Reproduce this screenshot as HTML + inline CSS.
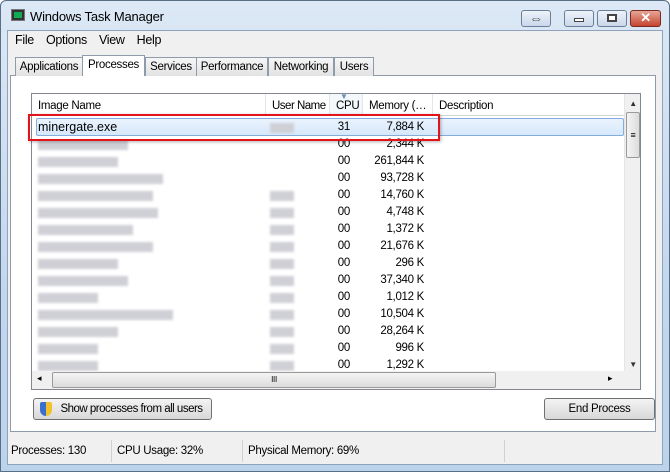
<!DOCTYPE html><html><head><style>
*{box-sizing:border-box;margin:0;padding:0}
body{width:670px;height:472px;overflow:hidden;font-family:"Liberation Sans",sans-serif;font-size:11.5px;letter-spacing:-0.3px;color:#000;position:relative;background:#fff;white-space:nowrap}
.abs{position:absolute}
.frame{left:0;top:0;width:670px;height:472px;background:linear-gradient(#dce8f5,#c3d7ee 60%,#bcd3ec);border:1px solid #5a6e86;border-radius:6px 6px 0 0}
.client{left:7px;top:30px;width:656px;height:435px;background:#f0f0f0;border:1px solid #8ea3bd}
.wb{top:10px;height:17px;border:1px solid #6d7f96;border-radius:3px;background:linear-gradient(#eef3fa,#c9d7ea);text-align:center;color:#555;line-height:14px}
.menu span{margin-right:12px}
.tab{top:57px;height:19px;border:1px solid #8d9bab;border-bottom:none;background:linear-gradient(#f6f6f6,#e2e2e2);padding:3px 0 0;text-align:center}
.panel{left:10px;top:75px;width:646px;height:357px;background:#fff;border:1px solid #8d9bab}
.list{left:31px;top:93px;width:610px;height:297px;border:1px solid #828790;background:#fff;overflow:hidden}
.hdr{top:0;height:22px;width:592px;border-bottom:1px solid #d5d5d5;background:#fff}
.hc{top:0;height:22px;line-height:24px;padding-left:6px;border-right:1px solid #e3e7ec;overflow:hidden}
.row{left:0;width:592px;height:17px;line-height:17px}
.c3{position:absolute;left:298px;width:30px;text-align:right;padding-right:10px}
.c4{position:absolute;left:330px;width:70px;text-align:right;padding-right:8px}
.bl{position:absolute;top:4px;height:10px;background:#cfd0d6;filter:blur(1.2px)}
.btn{top:398px;height:22px;border:1px solid #707070;border-radius:3px;background:linear-gradient(#f3f3f3,#e6e6e6 50%,#d8d8d8);text-align:center;line-height:20px}
.sb{top:440px;height:22px;line-height:22px;padding-left:3px;border-right:1px solid #d0d0d0}
</style></head><body>
<div class="abs frame"></div>
<div class="abs" style="left:11px;top:9px;width:14px;height:12px;background:#333;border:1px solid #777"><div style="margin:2px;height:6px;background:#1a5"></div></div>
<div class="abs" style="left:30px;top:9px;font-size:13px;letter-spacing:-0.2px">Windows Task Manager</div>
<div class="abs wb" style="left:521px;width:30px;font-size:14px">⇔</div>
<div class="abs wb" style="left:564px;width:30px"><div style="margin:7px auto 0;width:10px;height:4px;border:1px solid #444;background:#fff"></div></div>
<div class="abs wb" style="left:597px;width:30px"><div style="margin:3px auto 0;width:10px;height:8px;border:2px solid #444;background:#fff"></div></div>
<div class="abs wb" style="left:630px;width:31px;background:linear-gradient(#e8a597,#c4452f);border-color:#7a2a20;color:#fff;font-weight:bold;font-size:13px">✕</div>
<div class="abs client"></div>
<div class="abs menu" style="left:15px;top:33px;font-size:12.5px"><span>File</span><span>Options</span><span>View</span><span>Help</span></div>
<div class="abs panel"></div>
<div class="abs tab" style="left:15px;width:68px">Applications</div>
<div class="abs tab" style="left:82px;top:55px;height:21px;width:63px;background:#fff;z-index:2">Processes</div>
<div class="abs tab" style="left:145px;width:52px">Services</div>
<div class="abs tab" style="left:196px;width:72px">Performance</div>
<div class="abs tab" style="left:268px;width:66px">Networking</div>
<div class="abs tab" style="left:334px;width:40px">Users</div>
<div class="abs list">
 <div class="abs hdr">
  <div class="abs hc" style="left:0;width:234px">Image Name</div>
  <div class="abs hc" style="left:234px;width:64px;letter-spacing:-0.5px">User Name</div>
  <div class="abs hc" style="left:298px;width:33px;background:#f3f8fc">CPU<span style="position:absolute;left:10px;top:-9px;color:#6b8fb5;font-size:8px">▼</span></div>
  <div class="abs hc" style="left:331px;width:70px">Memory (…</div>
  <div class="abs hc" style="left:401px;width:191px;border:none">Description</div>
 </div>
 <div class="abs" style="left:4px;top:24px;width:588px;height:18px;background:linear-gradient(#eaf3fd,#d6e8fb);border:1px solid #84acdd;border-radius:2px"></div>
 <div id="rows"></div>
 <div class="abs" style="left:592px;top:0;width:17px;height:277px;background:#f0f0f0;border-left:1px solid #e5e5e5">
  <div style="text-align:center;font-size:8px;color:#333;margin-top:5px">▲</div>
  <div style="position:absolute;left:1px;top:18px;width:14px;height:46px;border:1px solid #9a9a9a;border-radius:2px;background:linear-gradient(90deg,#f4f4f4,#dcdcdc);text-align:center;line-height:44px;font-size:9px">≡</div>
  <div style="position:absolute;bottom:2px;width:16px;text-align:center;font-size:8px;color:#333">▼</div>
 </div>
 <div class="abs" style="left:0;top:277px;width:609px;height:18px;background:#f0f0f0">
  <div style="position:absolute;left:5px;top:2px;font-size:9px">◂</div>
  <div style="position:absolute;left:20px;top:1px;width:444px;height:16px;border:1px solid #9a9a9a;border-radius:2px;background:linear-gradient(#f4f4f4,#dcdcdc);text-align:center;line-height:14px;font-size:8px">III</div>
  <div style="position:absolute;left:576px;top:2px;font-size:9px">▸</div>
 </div>
</div>
<div class="abs" style="left:28px;top:114px;width:412px;height:27px;border:2px solid #e0141a;box-shadow:1px 1px 3px rgba(0,0,0,.3)"></div>
<div class="abs btn" style="left:33px;width:179px;padding-left:18px;letter-spacing:-0.5px">Show processes from all users<span style="position:absolute;left:6px;top:3px;width:12px;height:14px;background:linear-gradient(90deg,#3a6fd0 50%,#f2c22a 50%);border-radius:2px 2px 6px 6px"></span></div>
<div class="abs btn" style="left:544px;width:111px">End Process</div>
<div class="abs sb" style="left:8px;width:104px">Processes: 130</div>
<div class="abs sb" style="left:112px;width:131px;padding-left:5px">CPU Usage: 32%</div>
<div class="abs sb" style="left:243px;width:262px;padding-left:5px">Physical Memory: 69%</div>
<script>
var d=[["minergate.exe","31","7,884 K"],[90,"00","2,344 K"],[80,"00","261,844 K"],[125,"00","93,728 K"],[115,"00","14,760 K"],[120,"00","4,748 K"],[95,"00","1,372 K"],[115,"00","21,676 K"],[80,"00","296 K"],[90,"00","37,340 K"],[60,"00","1,012 K"],[135,"00","10,504 K"],[80,"00","28,264 K"],[60,"00","996 K"],[60,"00","1,292 K"]];
var h="";d.forEach(function(r,i){var t=25+i*17;var n=typeof r[0]=="string"?'<span style="position:absolute;left:6px;font-size:12.5px;letter-spacing:0">'+r[0]+'</span>':'<span class="bl" style="left:6px;width:'+r[0]+'px"></span>';
h+='<div class="abs row" style="top:'+t+'px">'+n+(i==1||i==2||i==3?'':'<span class="bl" style="left:238px;width:24px"></span>')+'<span class="c3">'+r[1]+'</span><span class="c4">'+r[2]+'</span></div>';});
document.getElementById("rows").innerHTML=h;
</script>
</body></html>
